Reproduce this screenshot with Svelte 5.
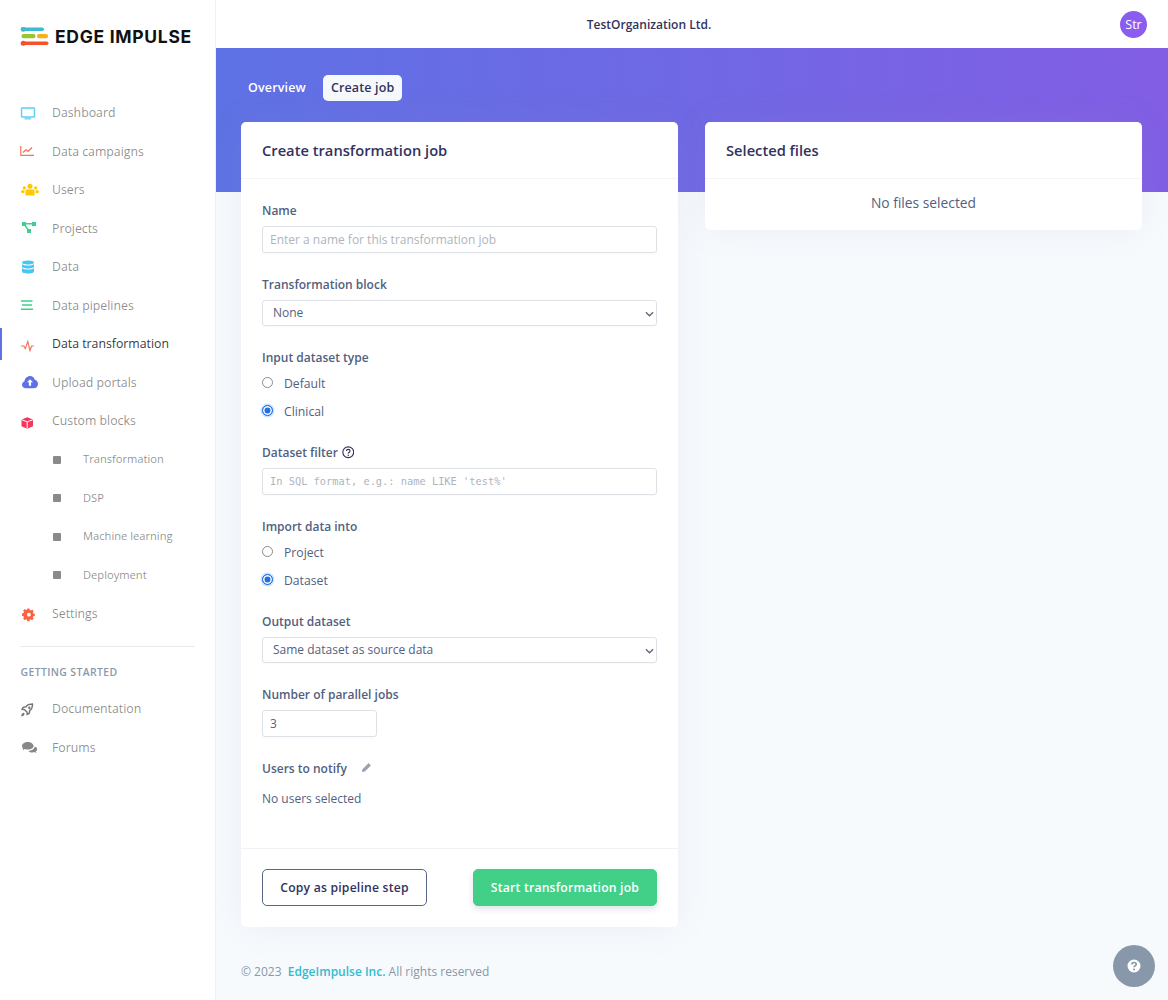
<script>
  const gear = "M8.9 5h2.2l.3 1.6 1 .4 1.4-.9 1.6 1.6-.9 1.4.4 1 1.6.3v2.2l-1.6.3-.4 1 .9 1.4-1.6 1.6-1.4-.9-1 .4-.3 1.6H8.9l-.3-1.6-1-.4-1.4.9-1.6-1.6.9-1.4-.4-1-1.6-.3V9.900l1.6-.3.4-1-.9-1.400 1.600-1.600 1.400.9 1-.4z";
  const nav = [
    { label: "Dashboard", icon: [
      { d: "M2.200 6h11.600a.7.7 0 0 1 .7.7v7.600a.7.7 0 0 1-.7.7H2.200a.7.7 0 0 1-.7-.7V6.700a.7.7 0 0 1 .7-.7z", s: "#5ccdf1", w: 1.4 },
      { d: "M4.500 16.800h6.500", s: "#5ccdf1", w: 1.2 } ] },
    { label: "Data campaigns", icon: [
      { d: "M.8 5v9.300H14", s: "#f5735f", w: 1.2 },
      { d: "M3 11.600l3-2.800 2.200 1.600 3.800-3.800", s: "#f5735f", w: 1.4 } ] },
    { label: "Users", icon: [
      { d: "M10 3.700a2.500 2.500 0 1 1 0 5 2.500 2.500 0 0 1 0-5zM4.300 6.200a1.700 1.700 0 1 1 0 3.400 1.700 1.700 0 0 1 0-3.400zM15.700 6.200a1.700 1.700 0 1 1 0 3.400 1.700 1.700 0 0 1 0-3.400zM6.800 9.400h6.400c.9 0 1.300 1 1.300 2v4.200h-9v-4.200c0-1 .4-2 1.300-2zM2 10.300h2.700c-.3.500-.4 1-.4 1.700v1H2c-.7 0-.9-.3-.9-.9 0-1 .2-1.800.9-1.800zM15.300 10.300H18c.7 0 .9.800.9 1.800 0 .6-.2.900-.9.900h-2.300v-1c0-.7-.1-1.200-.4-1.700z", f: "#ffc800" } ] },
    { label: "Projects", icon: [
      { d: "M2 4h4v4H2zM12 4h4v4h-4zM7 11h4v4H7z", f: "#3fd18b" },
      { d: "M4 5.800h9M4 6l5 7", s: "#3fd18b", w: 1.4 } ] },
    { label: "Data", icon: [
      { d: "M2 5.500C2 4.200 4.700 3.500 8 3.500s6 .7 6 2-2.700 2-6 2-6-.7-6-2zM2 7.100c1.200 1 3.500 1.500 6 1.500s4.800-.5 6-1.500v2.400c0 1.300-2.700 2-6 2s-6-.7-6-2zM2 11.100c1.200 1 3.500 1.500 6 1.500s4.800-.5 6-1.500v3.400c0 1.300-2.700 2-6 2s-6-.7-6-2z", f: "#47c8f2" } ] },
    { label: "Data pipelines", icon: [
      { d: "M1 6h11.500M2 10.100h10M1 14.200h12", s: "#3fd18b", w: 1.5 } ] },
    { label: "Data transformation", active: true, icon: [
      { d: "M1 12h2.800l1.500 2.600L7.800 7.600l2.200 9 1.600-4.600H14", s: "#f5735f", w: 1.2 } ] },
    { label: "Upload portals", icon: [
      { d: "M6 16.300c-2.300 0-4-1.500-4-3.500 0-1.500.9-2.700 2.300-3.200C4.900 6.200 7.300 4 10 4c2.400 0 4.300 1.500 4.800 3.800 1.900.4 3.200 2.100 3.200 4.100 0 2.500-1.900 4.400-4.400 4.400z", f: "#5e72e4" },
      { d: "M10 7.200l3 3.100h-1.900v3.500H8.900v-3.500H7z", f: "#fff" } ] },
    { label: "Custom blocks", icon: [
      { d: "M7.200 6.200l5.800 2.200v6.900l-5.800 2.500-5.700-2.500V8.400z", f: "#f5365c" },
      { d: "M1.800 8.700l5.400 2.200 5.600-2.200M7.200 11v6.500", s: "#fff", w: 1 } ] },
    { label: "Transformation", sub: true },
    { label: "DSP", sub: true },
    { label: "Machine learning", sub: true },
    { label: "Deployment", sub: true },
    { label: "Settings", icon: [
      { d: gear, f: "#fb6340", transform: "translate(-1.400 -.4) scale(.98)" },
      { d: "M8.900 8.800a1.900 1.900 0 1 1 0 3.800 1.900 1.900 0 0 1 0-3.800z", f: "#fff" } ] }
  ];
  const started = [
    { label: "Documentation", icon: [
      { d: "M13 5c-3.300 0-5.800.8-7 2.800l-2.900.5-1 2 2.400.3 2.400 2.400.3 2.400 2-1 .5-2.900c2-1.200 2.800-3.700 2.800-6.500z", s: "#777", w: 1.5 },
      { d: "M9.300 7.500a1.200 1.200 0 1 1 0 2.400 1.200 1.200 0 0 1 0-2.400zM3.200 13.800c1 .1 1.500.8 1.300 1.600-.3 1-1.900 1.600-3.400 2 .4-1.600.9-3.300 2.100-3.600z", f: "#777" } ] },
    { label: "Forums", icon: [
      { d: "M7.800 5C4.600 5 2 6.800 2 9c0 .9.400 1.700 1.100 2.400-.3.800-.9 1.400-.9 1.400 1.100 0 2-.4 2.600-.9.900.4 2 .6 3 .6 3.200 0 5.800-1.600 5.800-3.500S11 5 7.800 5z", f: "#888" },
      { d: "M14.700 8.500c.1.300.1.500.1.800 0 2.600-3 4.500-6.400 4.600.9 1 2.500 1.500 4.100 1.500.6 0 1.200-.1 1.700-.3.600.5 1.400.8 2.300.8 0 0-.5-.6-.7-1.300 .9-.7 1.400-1.500 1.400-2.400 0-1.200-.9-2.200-2.500-2.700z", f: "#888" } ] }
  ];
</script>

{#snippet navIcon(paths)}
  <svg class="ic" viewBox="0 0 20 20" aria-hidden="true">
    {#each paths as p}
      <path d={p.d} fill={p.f ?? "none"} stroke={p.s ?? "none"} stroke-width={p.w ?? 0} transform={p.transform} />
    {/each}
  </svg>
{/snippet}

{#snippet chevron()}
  <svg class="chev" viewBox="0 0 10 6" aria-hidden="true"><path d="M1 1l4 4 4-4" fill="none" stroke="#5b6678" stroke-width="1.400" /></svg>
{/snippet}

<div class="page">
  <aside class="side">
    <div class="logo">
      <svg class="mark" viewBox="0 0 30 20" aria-hidden="true">
        <rect x="1.500" y="0.500" width="22.500" height="3.600" rx="1.800" fill="#3fb8d3" />
        <circle cx="3.200" cy="2.300" r="2.500" fill="#3fb8d3" />
        <rect x="1.500" y="7" width="14" height="4.200" rx="2" fill="#9ac52e" />
        <rect x="17" y="7" width="11" height="4.200" rx="2" fill="#f9b016" />
        <rect x="1.500" y="14.500" width="27" height="3.600" rx="1.800" fill="#f4512c" />
        <circle cx="3.200" cy="16.300" r="2.500" fill="#f4512c" />
      </svg>
      <span class="word">EDGE IMPULSE</span>
    </div>
    <nav class="nav">
      {#each nav as item}
        <div class="row" class:active={item.active} class:sub={item.sub}>
          {#if item.sub}
            <span class="sq"></span>
          {:else}
            {@render navIcon(item.icon)}
          {/if}
          <span class="txt">{item.label}</span>
        </div>
      {/each}
    </nav>
    <div class="rule"></div>
    <div class="heading">GETTING STARTED</div>
    <nav class="nav">
      {#each started as item}
        <div class="row">
          {@render navIcon(item.icon)}
          <span class="txt">{item.label}</span>
        </div>
      {/each}
    </nav>
  </aside>

  <main class="main">
    <header class="top">
      <div class="org">TestOrganization Ltd.</div>
      <div class="user"><span class="avatar">Str</span></div>
    </header>

    <section class="hero">
      <div class="tabs">
        <span class="tab">Overview</span>
        <span class="tab on">Create job</span>
      </div>
    </section>

    <div class="cards">
      <div class="card">
        <div class="card-head"><h3>Create transformation job</h3></div>
        <div class="card-body">
          <label class="lab" for="n">Name</label>
          <input id="n" class="inp" placeholder="Enter a name for this transformation job" />

          <label class="lab gap" for="t">Transformation block</label>
          <div class="sel"><select id="t"><option>None</option></select>{@render chevron()}</div>

          <div class="lab gap">Input dataset type</div>
          <div class="radios">
            <label class="radio"><input type="radio" name="a" /><span>Default</span></label>
            <label class="radio"><input type="radio" name="a" checked /><span>Clinical</span></label>
          </div>

          <div class="lab gap filter">
            <span>Dataset filter</span>
            <svg class="q" viewBox="0 0 12 12" aria-hidden="true">
              <circle cx="6" cy="6" r="5.200" fill="none" stroke="#32325d" stroke-width="1.100" />
              <path d="M4.300 4.800c0-1 .8-1.500 1.700-1.500s1.700.5 1.700 1.400c0 1.300-1.700 1.200-1.700 2.500" fill="none" stroke="#32325d" stroke-width="1.100" />
              <circle cx="6" cy="8.800" r=".7" fill="#32325d" />
            </svg>
          </div>
          <input class="inp mono" placeholder="In SQL format, e.g.: name LIKE 'test%'" />

          <div class="lab gap">Import data into</div>
          <div class="radios">
            <label class="radio"><input type="radio" name="b" /><span>Project</span></label>
            <label class="radio"><input type="radio" name="b" checked /><span>Dataset</span></label>
          </div>

          <label class="lab gap" for="o">Output dataset</label>
          <div class="sel"><select id="o"><option>Same dataset as source data</option></select>{@render chevron()}</div>

          <label class="lab gap" for="p">Number of parallel jobs</label>
          <input id="p" class="inp short" value="3" />

          <div class="lab gap notify">
            <span>Users to notify</span>
            <svg class="pen" viewBox="0 0 12 12" aria-hidden="true">
              <path d="M8.300 1.200l2.500 2.500-6.600 6.600L1 11l.7-3.200z" fill="#98a2b3" />
            </svg>
          </div>
          <p class="none">No users selected</p>
        </div>
        <div class="card-foot">
          <button class="btn ghost">Copy as pipeline step</button>
          <button class="btn go">Start transformation job</button>
        </div>
      </div>

      <div class="card files">
        <div class="card-head"><h3>Selected files</h3></div>
        <div class="empty">No files selected</div>
      </div>
    </div>

    <footer class="foot">© 2023 &nbsp;<span class="link">EdgeImpulse Inc.</span> All rights reserved</footer>
  </main>

  <button class="help" aria-label="Help">
    <svg viewBox="0 0 14 14" aria-hidden="true">
      <circle cx="7" cy="7" r="6.500" fill="#fff" />
      <path d="M4.900 5.400c0-1.200 1-1.900 2.100-1.900s2.200.7 2.200 1.800c0 1.600-2.200 1.500-2.200 3" fill="none" stroke="#8898aa" stroke-width="1.700" />
      <circle cx="7" cy="10.400" r="1" fill="#8898aa" />
    </svg>
  </button>
</div>

<style>
  :global(body) { background: #f7fafd; }
  .page {
    display: flex;
    min-height: 1000px;
    font-family: "Open Sans", sans-serif;
    color: #525f7f;
  }

  .side {
    width: 215px;
    flex: none;
    background: #fff;
    border-right: 1px solid #eef1f5;
    box-sizing: content-box;
  }
  .logo { display: flex; align-items: center; height: 73px; padding-left: 20px; }
  .mark { width: 30px; height: 20px; }
  .word {
    margin-left: 5px;
    font-family: Inter, sans-serif;
    font-weight: 700;
    font-size: 17.500px;
    letter-spacing: .7px;
    color: #111;
    white-space: nowrap;
  }
  .nav { display: flex; flex-direction: column; }
  .logo + .nav { margin-top: 20.200px; }
  .row {
    position: relative;
    display: flex;
    align-items: center;
    height: 38.570px;
    padding-left: 20px;
    font-size: 12.300px;
    color: rgba(0, 0, 0, .45);
    white-space: nowrap;
  }
  .row.active { color: rgba(0, 0, 0, .8); }
  .row.active::before {
    content: "";
    position: absolute;
    left: 0;
    top: 3px;
    bottom: 3px;
    width: 2px;
    background: #5e72e4;
  }
  .ic { width: 20px; height: 20px; margin-right: 12px; flex: none; }
  .row.sub { padding-left: 53px; font-size: 11.150px; }
  .row.sub .txt { margin-top: -2px; }
  .sq { width: 8px; height: 8px; background: #8a8a8a; border-radius: 1px; margin-right: 22px; flex: none; }
  .rule { height: 1px; background: #e9ecef; margin: 12.800px 20px 0 20px; }
  .heading {
    margin: 18px 0 0 20.500px;
    font-size: 10.400px;
    line-height: 14px;
    font-weight: 600;
    letter-spacing: .4px;
    color: #8898aa;
  }
  .heading + .nav { margin-top: 10.700px; }

  .main { flex: 1; min-width: 0; display: flex; flex-direction: column; }
  .top { height: 48px; background: #fff; display: flex; align-items: center; }
  .org { flex: 1; text-align: center; font-size: 12px; font-weight: 600; color: #32325d; }
  .user { width: 86px; display: flex; justify-content: flex-end; padding-right: 21px; box-sizing: border-box; }
  .avatar {
    width: 27px; height: 27px; border-radius: 50%;
    background: #8b5cf0; color: #fff;
    font-size: 12.500px; line-height: 27px; text-align: center;
  }

  .hero {
    height: 144px;
    background: linear-gradient(87deg, #5e72e4 0, #825ee4 100%);
    padding: 26.500px 25px 0 25px;
    box-sizing: border-box;
  }
  .tabs { display: flex; gap: 4px; align-items: center; }
  .tab {
    padding: 0 7px;
    height: 26px;
    line-height: 26px;
    border-radius: 5px;
    font-size: 12.500px;
    font-weight: 600;
    color: #fff;
    letter-spacing: .15px;
  }
  .tab.on { background: #f6f9fc; color: #32325d; margin-left: 6px; padding: 0 8px; }

  .cards {
    display: grid;
    grid-template-columns: 437px 437px;
    column-gap: 27px;
    align-items: start;
    padding-left: 25px;
    margin-top: -70.500px;
  }
  .card {
    background: #fff;
    border-radius: 5px;
    box-shadow: 0 0 32px rgba(136, 152, 170, .12);
  }
  .card-head { height: 56px; padding: 0 21px; border-bottom: 1px solid #f3f4f7; display: flex; align-items: center; }
  h3 { margin: 0; font-size: 14.700px; font-weight: 600; color: #32325d; }
  .card-body { padding: 23.500px 21px 0 21px; height: 669px; box-sizing: border-box; }

  .lab {
    display: block;
    font-size: 12px;
    line-height: 17px;
    font-weight: 600;
    color: #525f7f;
    margin-bottom: 7px;
  }
  .gap { margin-top: 23px; }
  .notify { margin-top: 22.500px; }
  .inp, .sel select {
    display: block;
    width: 100%;
    height: 26.500px;
    box-sizing: border-box;
    border: 1px solid #dee2e6;
    border-radius: 3px;
    background: #fff;
    font-family: inherit;
    font-size: 12px;
    color: #525f7f;
    padding: 0 7px;
    outline: none;
    box-shadow: 0 1px 2px rgba(50, 50, 93, .03);
  }
  .inp::placeholder { color: #adb5bd; opacity: 1; }
  .mono { font-family: "DejaVu Sans Mono", monospace; font-size: 10.350px; height: 27px; }
  .short { width: 115px; height: 27px; }
  .sel { position: relative; }
  .sel select { appearance: none; padding-left: 10px; }
  .chev { position: absolute; right: 3px; top: 11px; width: 9px; height: 6px; pointer-events: none; }

  .radios { display: flex; flex-direction: column; gap: 9.500px; margin-top: 8.250px; }
  .radio { display: flex; align-items: center; height: 18.500px; font-size: 12.200px; }
  .radio input {
    appearance: none;
    width: 11px; height: 11px;
    margin: -2px 11px 0 0;
    border-radius: 50%;
    border: 1px solid #8a8a8a;
    background: #fff;
    box-sizing: border-box;
    flex: none;
  }
  .radio input:checked {
    border: 1.500px solid #1f6fe5;
    background: #1f6fe5;
    box-shadow: inset 0 0 0 1.500px #fff, 0 0 0 1.500px rgba(31, 111, 229, .2);
  }
  .filter { display: flex; align-items: center; gap: 4px; }
  .q { width: 12.500px; height: 12.500px; }
  .notify { display: flex; align-items: center; gap: 14.500px; margin-bottom: 0; }
  .pen { width: 11px; height: 11px; margin-top: -2px; }
  .none { margin: 13px 0 0; font-size: 12px; line-height: 17px; }

  .card-foot {
    border-top: 1px solid #f0f2f5;
    height: 79px;
    padding: 20px 21px 0 21px;
    box-sizing: border-box;
    display: flex;
    justify-content: space-between;
    align-items: flex-start;
  }
  .btn {
    height: 37px;
    border-radius: 5px;
    font-family: inherit;
    font-size: 12.200px;
    font-weight: 600;
    letter-spacing: .2px;
    padding: 1px 0 0;
  }
  .ghost { width: 165px; background: #fff; border: 1px solid #5a6686; color: #32325d; }
  .go {
    width: 184px;
    background: #42d089; border: 1px solid #42d089; color: #fff;
    box-shadow: 0 3px 6px rgba(50, 50, 93, .14);
  }

  .empty {
    height: 47.500px; padding-bottom: 4px;
    display: flex; align-items: center; justify-content: center;
    font-size: 13.800px;
  }

  .foot {
    margin: 36px 0 0 25px;
    font-size: 12px;
    line-height: 17px;
    color: #8898aa;
  }
  .link { color: #2fbcd0; font-weight: 600; }

  .help {
    position: fixed;
    left: 1113px;
    top: 945px;
    width: 42px;
    height: 42px;
    border: 0;
    border-radius: 50%;
    background: #8898aa;
    display: flex;
    align-items: center;
    justify-content: center;
    padding: 0;
  }
  .help svg { width: 14px; height: 14px; }
</style>
